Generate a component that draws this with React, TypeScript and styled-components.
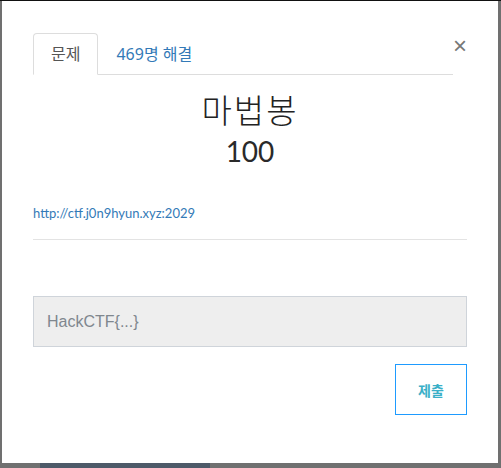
import React from "react";
import styled, { createGlobalStyle } from "styled-components";

const Global = createGlobalStyle`
  html, body { margin: 0; padding: 0; background: #6f6f6f; }
  body { font-family: Lato, "Noto Sans CJK KR", sans-serif; }
`;

const Screen = styled.div`
  width: 501px;
  height: 468px;
  box-sizing: border-box;
  border-top: 1px solid #111;
  background: #707070;
  display: flex;
  flex-direction: column;
  overflow: hidden;
`;

const Modal = styled.div`
  margin-left: 2px;
  width: 496px;
  height: 462px;
  background: #fff;
  box-sizing: border-box;
  padding: 32px 31px 0 31px;
  display: flex;
  flex-direction: column;
`;

const Under = styled.div`
  display: flex;
  height: 5px;
`;

const UnderDark = styled.div`
  margin-left: 40px;
  width: 170px;
  background: #4d5a68;
`;

const Header = styled.div`
  display: flex;
  align-items: flex-start;
`;

const Tabs = styled.div`
  flex: 1;
  display: flex;
  border-bottom: 1px solid #dddddd;
`;

const Tab = styled.div<{ $active?: boolean }>`
  font-family: "Noto Sans", "Noto Sans CJK KR", sans-serif;
  font-size: 16px;
  line-height: 21px;
  padding: 10px 17px 9px 17px;
  margin-bottom: -1px;
  border: 1px solid ${(p) => (p.$active ? "#dddddd" : "transparent")};
  border-bottom-color: ${(p) => (p.$active ? "#fff" : "transparent")};
  border-radius: 4px 4px 0 0;
  color: ${(p) => (p.$active ? "#555" : "#337ab7")};
  background: ${(p) => (p.$active ? "#fff" : "transparent")};
`;

const Close = styled.div`
  width: 14px;
  margin-top: 1px;
  font-family: "Liberation Sans", sans-serif;
  font-weight: 400;
  font-size: 24px;
  line-height: 24px;
  color: #777;
  text-align: right;
`;

const Title = styled.h3`
  margin: 14px 0 0 0;
  text-align: center;
  font-family: "Noto Sans CJK KR", sans-serif;
  font-weight: 300;
  font-size: 33px;
  letter-spacing: 2px;
  line-height: 40px;
  color: #222;
`;

const Value = styled.h4`
  margin: 4px 0 0 0;
  text-align: center;
  font-family: Lato, "Noto Sans CJK KR", sans-serif;
  font-weight: 400;
  font-size: 28px;
  line-height: 36px;
  color: #2a2a2a;
`;

const Link = styled.a`
  margin-top: 35px;
  font-family: Lato, sans-serif;
  font-size: 13px;
  line-height: 18px;
  color: #337ab7;
  text-decoration: none;
  align-self: flex-start;
`;

const Rule = styled.div`
  margin-top: 17px;
  height: 1px;
  background: #e3e3e3;
`;

const Input = styled.div`
  margin-top: 56px;
  height: 51px;
  box-sizing: border-box;
  background: #eeeeee;
  border: 1px solid #cfd4da;
  padding-left: 13px;
  display: flex;
  align-items: center;
  font-family: "Liberation Sans", Arial, sans-serif;
  font-size: 16px;
  color: #80878e;
`;

const Actions = styled.div`
  margin-top: 17px;
  display: flex;
  justify-content: flex-end;
`;

const Button = styled.div`
  width: 72px;
  height: 51px;
  box-sizing: border-box;
  border: 1px solid #1e9bff;
  display: flex;
  align-items: center;
  justify-content: center;
  font-family: "Noto Sans CJK KR", sans-serif;
  font-weight: bold;
  font-size: 14px;
  color: #3ab0c8;
`;

export default function App() {
  return (
    <>
      <Global />
      <Screen>
        <Modal>
          <Header>
            <Tabs>
              <Tab $active>문제</Tab>
              <Tab>469명 해결</Tab>
            </Tabs>
            <Close>×</Close>
          </Header>
          <Title>마법봉</Title>
          <Value>100</Value>
          <Link href="#">http://ctf.j0n9hyun.xyz:2029</Link>
          <Rule />
          <Input>HackCTF{"{...}"}</Input>
          <Actions>
            <Button>제출</Button>
          </Actions>
        </Modal>
        <Under>
          <UnderDark />
        </Under>
      </Screen>
    </>
  );
}
